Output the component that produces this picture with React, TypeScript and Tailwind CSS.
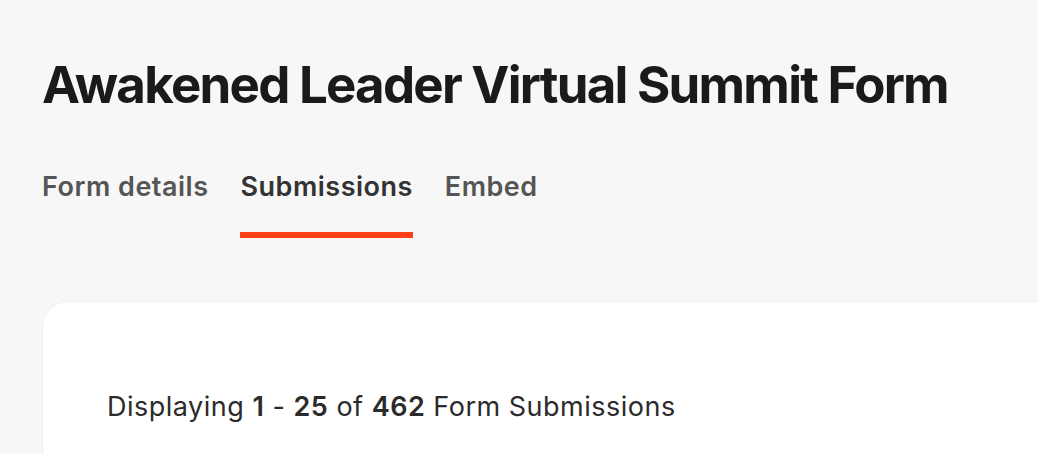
import React from "react";

const tabs = ["Form details", "Submissions", "Embed"];

export default function App() {
  const active = "Submissions";
  return (
    <div className="min-h-screen bg-[#f7f7f7] pl-[42px] pt-[55px] font-['Inter',sans-serif] overflow-hidden">
      <h1 className="text-[51px] leading-[60px] font-bold tracking-[-1.75px] text-[#1a1a1a] whitespace-nowrap">
        Awakened Leader Virtual Summit Form
      </h1>

      <div className="mt-[56px] flex gap-[32px]">
        {tabs.map((t) => (
          <div key={t} className="flex flex-col">
            <span
              className={
                "text-[27px] leading-[32px] font-semibold tracking-[0.5px] whitespace-nowrap " +
                (t === active ? "text-[#333333]" : "text-[#555555]")
              }
            >
              {t}
            </span>
            <div
              className={
                "mt-[29px] h-[6px] " + (t === active ? "bg-[#ff4118]" : "bg-transparent")
              }
            />
          </div>
        ))}
      </div>

      <div className="mt-[63px] rounded-tl-[26px] bg-white border border-[#efefef] border-r-0 pl-[64px] pt-[89px] pb-[40px]">
        <p className="text-[27px] leading-[32px] tracking-[0.5px] text-[#2b2b2b] whitespace-nowrap">
          Displaying <span className="font-semibold">1</span> -{" "}
          <span className="font-semibold">25</span> of{" "}
          <span className="font-semibold">462</span> Form Submissions
        </p>
      </div>
    </div>
  );
}
